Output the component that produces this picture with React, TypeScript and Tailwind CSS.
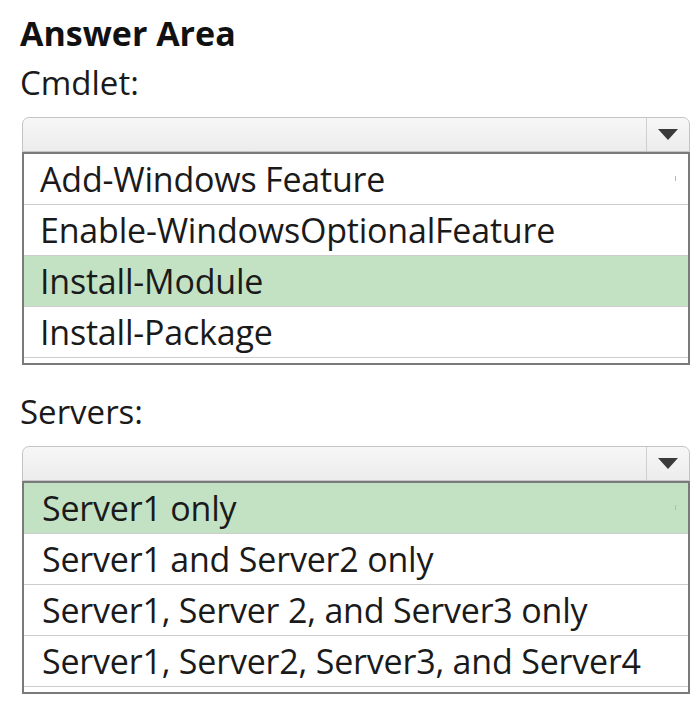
import React from "react";

const font = { fontFamily: '"Open Sans", "Noto Sans", "Liberation Sans", sans-serif' };

function Caret() {
  return (
    <svg width="20" height="11" viewBox="0 0 20 11" aria-hidden="true">
      <polygon points="0,0 20,0 10,11" fill="#3a3a3a" />
    </svg>
  );
}

function SelectBox() {
  return (
    <div className="flex h-[35px] w-[668px] rounded-t-[7px] border border-[#c4c4c4] bg-gradient-to-b from-[#f7f7f7] to-[#ececec]">
      <div className="flex-1" />
      <div className="flex w-[43px] items-center justify-center border-l border-[#cfcfcf]">
        <Caret />
      </div>
    </div>
  );
}

function OptionList({ items, selected, padX }: { items: string[]; selected: number; padX: string }) {
  return (
    <div className="w-[668px] border-2 border-[#7a7a7a] bg-white pb-[5px]">
      {items.map((t, i) => (
        <div
          key={t}
          className={`relative flex h-[51px] items-center border-b border-[#cdcdcd] ${padX} text-[34px] leading-none tracking-[-0.2px] text-[#1a1a1a] ${
            i === selected ? "bg-[#c3e2c4]" : "bg-white"
          }`}
        >
          <span className="whitespace-nowrap">{t}</span>
          {i === 0 && <span className="absolute right-[12px] top-[22px] h-[5px] w-[1px] bg-[#b8b8b8]" />}
        </div>
      ))}
    </div>
  );
}

export default function App() {
  return (
    <div className="min-h-[707px] w-[700px] bg-white pl-[20px] pt-[14px]" style={font}>
      <div className="text-[34px] font-bold leading-[38px] text-[#111]">Answer Area</div>
      <div className="mt-[12px] text-[33px] leading-[38px] text-[#1a1a1a]">Cmdlet:</div>
      <div className="mt-[15px] pl-[2px]">
        <SelectBox />
        <OptionList
          padX="pl-[16px]"
          selected={2}
          items={["Add-Windows Feature", "Enable-WindowsOptionalFeature", "Install-Module", "Install-Package"]}
        />
      </div>
      <div className="mt-[28px] text-[33px] leading-[38px] text-[#1a1a1a]">Servers:</div>
      <div className="mt-[15px] pl-[2px]">
        <SelectBox />
        <OptionList
          padX="pl-[18px]"
          selected={0}
          items={[
            "Server1 only",
            "Server1 and Server2 only",
            "Server1, Server 2, and Server3 only",
            "Server1, Server2, Server3, and Server4",
          ]}
        />
      </div>
    </div>
  );
}
